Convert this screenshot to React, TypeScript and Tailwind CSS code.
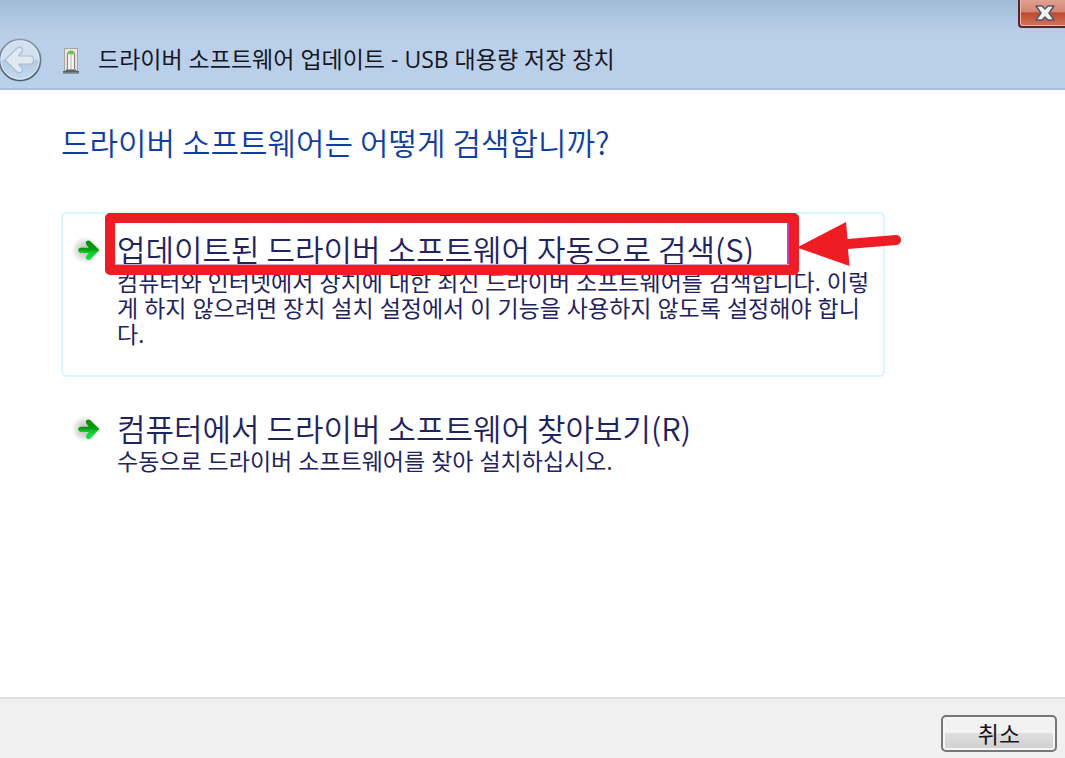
import type { ReactNode } from 'react'

function BackIcon() {
  return (
    <svg viewBox="0 0 44 44" className="h-11 w-11" aria-hidden="true">
      <defs>
        <linearGradient id="back-fill" x1="0" y1="0" x2="0" y2="1">
          <stop offset="0" stopColor="#d3e0ee" />
          <stop offset="0.48" stopColor="#d3e0ef" />
          <stop offset="0.52" stopColor="#b4cbe3" />
          <stop offset="1" stopColor="#c6daee" />
        </linearGradient>
        <linearGradient id="back-ring" x1="0" y1="0" x2="0" y2="1">
          <stop offset="0" stopColor="#8799b0" />
          <stop offset="1" stopColor="#4a5568" />
        </linearGradient>
      </defs>
      <circle cx="22" cy="22" r="22" fill="#a0b8d4" opacity="0.6" />
      <circle cx="22" cy="22" r="20.5" fill="url(#back-fill)" stroke="url(#back-ring)" strokeWidth="1.6" />
      <circle cx="22" cy="22" r="19" fill="none" stroke="#dfeaf5" strokeWidth="1" />
      <path
        d="M7 22 18.500 10.500q3-2.500 5.500 0 1.200 2-.6 4L20.500 18H33q2.500.3 2.500 4t-2.500 4H20.500l2.900 3q1.800 2 .6 4.500-2.500 2.500-5.500 0Z"
        fill="#e0e8f1"
        stroke="#a9bed5"
        strokeWidth="1.2"
        strokeLinejoin="round"
      />
    </svg>
  )
}

function DriveIcon() {
  return (
    <svg viewBox="0 0 18 28" className="h-7 w-[18px]" aria-hidden="true">
      <rect x="2.500" y="1.500" width="13" height="22" fill="#e9e7e1" stroke="#aaa69f" />
      <path d="M5.500 22V8q0-3.500 3.500-3.500T12.500 8v14" fill="#f8f8f6" stroke="#8a8681" strokeWidth="1.200" />
      <path d="M9 8v14" stroke="#c9c6c0" strokeWidth="1.500" />
      <ellipse cx="9" cy="5.500" rx="2.800" ry="2" fill="#5cc653" />
      <path d="M4 22.500h10v1.500h3v2.500H1V24h3Z" fill="#59616b" />
      <path d="M1 26h16" stroke="#8c959f" />
    </svg>
  )
}

function GoArrow({ id }: { id: string }) {
  return (
    <svg viewBox="0 0 30 28" className="h-7 w-[30px] shrink-0" aria-hidden="true">
      <defs>
        <linearGradient id={id} x1="0" y1="0" x2="0" y2="1">
          <stop offset="0" stopColor="#068c08" />
          <stop offset="0.45" stopColor="#089c0c" />
          <stop offset="0.6" stopColor="#0cc82c" />
          <stop offset="1" stopColor="#18e44c" />
        </linearGradient>
        <radialGradient id={`${id}-shade`}>
          <stop offset="0" stopColor="#b4b4b4" />
          <stop offset="0.55" stopColor="#dcdcdc" />
          <stop offset="1" stopColor="#fff" />
        </radialGradient>
      </defs>
      <circle cx="14" cy="14" r="13.500" fill={`url(#${id}-shade)`} />
      <path
        d="M9.500 11.800h8.200l-2.400-3.200q-1.200-2.200.4-3.600 1.800-1.200 3.600.2l9.200 8.800-9.200 9.400q-1.800 1.400-3.600.2-1.500-1.500-.3-3.500l2.300-3.200H9.500Q7.200 16.500 7.200 14.300t2.300-2.500Z"
        fill={`url(#${id})`}
      />
    </svg>
  )
}

// Red frame and pointer drawn over the recommended option
function Highlight() {
  return (
    <svg
      viewBox="0 0 800 64"
      className="pointer-events-none absolute left-11 top-0 h-16 w-[800px] max-w-none"
      aria-hidden="true"
    >
      <path d="M683 9v43" stroke="#d43bb8" strokeWidth="2" />
      <path d="M10 52.500h674" stroke="#d9a0d0" strokeWidth="1" />
      <rect x="5" y="6" width="684" height="52" fill="none" stroke="#ee1c23" strokeWidth="10" strokeLinejoin="round" />
      <path d="M692 35.500 741 10l1.500 17 48-4a5 5 0 0 1 1 10l-48.500 4 1.500 17Z" fill="#ee1c23" />
    </svg>
  )
}

type OptionProps = {
  id: string
  title: string
  text: string
  outlined?: boolean
  children?: ReactNode
}

function Option({ id, title, text, outlined, children }: OptionProps) {
  return (
    <div className="relative max-w-[824px]">
      <button
        type="button"
        className={`flex w-full items-start gap-4 rounded-[5px] border-2 px-2 pt-[18px] text-left text-[#1f2460] ${
          outlined ? 'border-[#d5f7fd] pb-7' : 'border-transparent pb-4'
        }`}
      >
        <span className="pt-1">
          <GoArrow id={id} />
        </span>
        <span className="min-w-0 flex-1">
          <span className="mb-1 block font-['Noto_Sans_CJK_KR',sans-serif] text-[31px] font-[350] leading-[33px]">
            {title}
          </span>
          <span className="-mr-1 block text-[23px] leading-[26px]">{text}</span>
        </span>
      </button>
      {children}
    </div>
  )
}

export default function App() {
  return (
    <div className="flex min-h-screen flex-col bg-white font-['Open_Sans','Noto_Sans_CJK_KR',sans-serif]">
      <header className="flex flex-col border-b-2 border-[#a6c1df] bg-linear-to-b from-[#a2bbd7] to-[#bad0ea] to-40%">
        <div className="flex h-[29px] justify-end">
          <button
            type="button"
            aria-label="닫기"
            className="flex h-7 w-[47px] items-center justify-center rounded-bl-[4px] border-b-2 border-l-2 border-[#562532] bg-[linear-gradient(#e0a090,#d58474_45%,#bd4a30_50%,#d3745a)] pl-1 shadow-[inset_1px_-1px_0_#eeb5a4]"
          >
            <svg viewBox="0 0 20 16" className="h-4 w-5" aria-hidden="true">
              <path
                d="M1 1h6l3 3L13 1h6l-5 7 5 7h-6l-3-3-3 3H1l5-7Z"
                fill="#f3f3f3"
                stroke="#54586b"
                strokeWidth="1.500"
                strokeLinejoin="round"
              />
            </svg>
          </button>
        </div>
        <div className="flex h-[59px] items-center">
          <button type="button" aria-label="뒤로" className="-ml-0.5 mt-0.5">
            <BackIcon />
          </button>
          <span className="ml-5 mt-1">
            <DriveIcon />
          </span>
          <h1 className="ml-[18px] text-[23px] leading-8 text-[#17171f]">
            드라이버 소프트웨어 업데이트 - USB 대용량 저장 장치
          </h1>
        </div>
      </header>

      <main className="flex-1 px-[61px] pt-8">
        <h2 className="font-['Noto_Sans_CJK_KR',sans-serif] text-[31px] font-[350] leading-10 text-[#123f9f]">
          드라이버 소프트웨어는 어떻게 검색합니까?
        </h2>
        <div className="flex flex-col gap-[14px] pt-[50px]">
          <Option
            id="go-auto"
            title="업데이트된 드라이버 소프트웨어 자동으로 검색(S)"
            text="컴퓨터와 인터넷에서 장치에 대한 최신 드라이버 소프트웨어를 검색합니다. 이렇게 하지 않으려면 장치 설치 설정에서 이 기능을 사용하지 않도록 설정해야 합니다."
            outlined
          >
            <Highlight />
          </Option>
          <Option
            id="go-browse"
            title="컴퓨터에서 드라이버 소프트웨어 찾아보기(R)"
            text="수동으로 드라이버 소프트웨어를 찾아 설치하십시오."
          />
        </div>
      </main>

      <footer className="flex justify-end border-t-2 border-[#e0e0e0] bg-[#f0f0f0] pb-1.5 pr-2 pt-4">
        <button
          type="button"
          className="h-[37px] w-[116px] rounded-[5px] border-2 border-[#777] bg-linear-to-b from-[#f2f2f2] from-50% via-[#dedede] via-50% to-[#cfcfcf] text-[23px] leading-8 text-[#17171f] shadow-[inset_0_0_0_2px_#f5f5f5]"
        >
          취소
        </button>
      </footer>
    </div>
  )
}
